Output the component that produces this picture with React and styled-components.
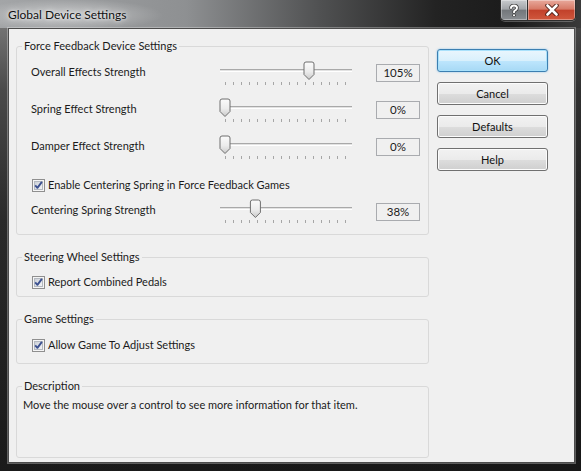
import React from 'react';
import styled, { createGlobalStyle } from 'styled-components';

const GlobalStyle = createGlobalStyle`
  html, body {
    margin: 0;
    padding: 0;
    background: #1c1c1c;
  }
  body {
    font-family: Lato, 'Noto Sans', sans-serif;
    font-size: 11px;
    color: #1b1b1b;
  }
`;

const MAX = 150;

const CheckIcon = () => (
  <svg width="13" height="13" viewBox="0 0 13 13">
    <defs>
      <linearGradient id="cbFill" x1="0" y1="0" x2="1" y2="1">
        <stop offset="0" stopColor="#c9ced6" />
        <stop offset="1" stopColor="#f7f8f9" />
      </linearGradient>
    </defs>
    <rect x="0.5" y="0.5" width="12" height="12" fill="#f5f5f5" stroke="#8f8f8f" />
    <rect x="2.5" y="2.5" width="8" height="8" fill="url(#cbFill)" stroke="#b4b9c0" />
    <path d="M3.2 6.4 L5.4 8.8 L9.9 2.9" fill="none" stroke="#3c5190" strokeWidth="1.9" strokeLinejoin="round" />
  </svg>
);

const SliderTrack = ({ value }) => {
  const x = 7 + (value / MAX) * 120;
  const ticks = Array.from({ length: 16 }, (_, i) => 7 + i * 8);
  return (
    <svg width="136" height="24" viewBox="0 0 136 24">
      <defs>
        <linearGradient id="thumbFill" x1="0" y1="0" x2="0" y2="1">
          <stop offset="0" stopColor="#fbfbfb" />
          <stop offset="0.55" stopColor="#ececec" />
          <stop offset="1" stopColor="#c9c9c9" />
        </linearGradient>
      </defs>
      <line x1="2" y1="8.5" x2="134" y2="8.5" stroke="#a9a9a9" />
      <line x1="2" y1="9.5" x2="134" y2="9.5" stroke="#e2e2e2" />
      <line x1="2" y1="10.5" x2="134" y2="10.5" stroke="#ffffff" />
      {ticks.map((t) => (
        <line key={t} x1={t + 0.5} y1="21" x2={t + 0.5} y2="24" stroke="#a6a6a6" />
      ))}
      <path
        d={`M${x - 5} 3 Q${x - 5} 1 ${x - 3} 1 H${x + 3} Q${x + 5} 1 ${x + 5} 3 V13.5 L${x} 18.5 L${x - 5} 13.5 Z`}
        fill="url(#thumbFill)"
        stroke="#6f6f6f"
      />
    </svg>
  );
};

const HelpGlyph = () => (
  <svg width="10" height="13" viewBox="0 0 10 13">
    <path d="M2 4 Q2 1.5 5 1.5 Q8 1.5 8 4 Q8 5.6 5.8 6.6 Q5 7 5 8.3" fill="none" stroke="#3a3a3a" strokeWidth="3.4" strokeLinecap="round" />
    <path d="M2 4 Q2 1.5 5 1.5 Q8 1.5 8 4 Q8 5.6 5.8 6.6 Q5 7 5 8.3" fill="none" stroke="#ffffff" strokeWidth="2" strokeLinecap="round" />
    <circle cx="5" cy="11.3" r="1.7" fill="#3a3a3a" />
    <circle cx="5" cy="11.3" r="1.1" fill="#ffffff" />
  </svg>
);

const CloseGlyph = () => (
  <svg width="14" height="12" viewBox="0 0 14 12">
    <path d="M2.5 1.5 L11.5 10.5 M11.5 1.5 L2.5 10.5" stroke="#4a1a12" strokeWidth="4.4" strokeLinecap="round" />
    <path d="M2.5 1.5 L11.5 10.5 M11.5 1.5 L2.5 10.5" stroke="#ffffff" strokeWidth="2.6" strokeLinecap="round" />
  </svg>
);

const App = () => {
  const sliders = [
    { label: 'Overall Effects Strength', value: 105 },
    { label: 'Spring Effect Strength', value: 0 },
    { label: 'Damper Effect Strength', value: 0 },
  ];

  return (
    <>
      <GlobalStyle />
      <Window>
        <TitleBar>
          <Caption>Global Device Settings</Caption>
          <CaptionButtons>
            <HelpButton><HelpGlyph /></HelpButton>
            <CloseButton><CloseGlyph /></CloseButton>
          </CaptionButtons>
        </TitleBar>

        <Frame>
          <Panel>
            <LeftColumn>
              <Group>
                <Legend>Force Feedback Device Settings</Legend>
                <ForceContent>
                  {sliders.map((s) => (
                    <SliderRow key={s.label} $height={37}>
                      <RowLabel>{s.label}</RowLabel>
                      <SliderTrack value={s.value} />
                      <ValueBox>{s.value}%</ValueBox>
                    </SliderRow>
                  ))}
                  <CheckRow $height={26} $top={7} $indent={1}>
                    <CheckIcon />
                    <span>Enable Centering Spring in Force Feedback Games</span>
                  </CheckRow>
                  <SliderRow $height={26}>
                    <RowLabel>Centering Spring Strength</RowLabel>
                    <SliderTrack value={38} />
                    <ValueBox>38%</ValueBox>
                  </SliderRow>
                </ForceContent>
              </Group>

              <Group>
                <Legend>Steering Wheel Settings</Legend>
                <SimpleContent $top={6} $bottom={3}>
                  <CheckRow $height={22}>
                    <CheckIcon />
                    <span>Report Combined Pedals</span>
                  </CheckRow>
                </SimpleContent>
              </Group>

              <Group>
                <Legend>Game Settings</Legend>
                <SimpleContent $top={7} $bottom={7}>
                  <CheckRow $height={22}>
                    <CheckIcon />
                    <span>Allow Game To Adjust Settings</span>
                  </CheckRow>
                </SimpleContent>
              </Group>

              <Group $grow>
                <Legend>Description</Legend>
                <DescriptionText>
                  Move the mouse over a control to see more information for that item.
                </DescriptionText>
              </Group>
            </LeftColumn>

            <ButtonColumn>
              <DialogButton $primary>OK</DialogButton>
              <DialogButton>Cancel</DialogButton>
              <DialogButton>Defaults</DialogButton>
              <DialogButton>Help</DialogButton>
            </ButtonColumn>
          </Panel>
        </Frame>
      </Window>
    </>
  );
};

const Window = styled.div`
  width: 581px;
  height: 471px;
  display: flex;
  flex-direction: column;
  overflow: hidden;
  background:
    linear-gradient(to right, rgba(20, 20, 20, 0) 0%, rgba(20, 20, 20, 0.5) 100%),
    linear-gradient(to bottom, #858585 0px, #4a4a4a 90px, #2a2a2a 220px, #1a1a1a 100%);
`;

const TitleBar = styled.div`
  height: 28px;
  display: flex;
  align-items: flex-start;
  padding-left: 8px;
  background:
    radial-gradient(ellipse 95px 16px at 68px 15px, rgba(255, 255, 255, 0.45), rgba(255, 255, 255, 0) 100%),
    linear-gradient(to right, #a3a5a7 0%, #8e9092 32%, #505152 55%, #232323 75%, #1b1b1b 88%, #3a3a3a 100%);
`;

const Caption = styled.div`
  padding-top: 6px;
  line-height: 18px;
  font-size: 12px;
  color: #111;
  text-shadow: 0 0 6px rgba(255, 255, 255, 0.9), 0 0 3px rgba(255, 255, 255, 0.7);
`;

const CaptionButtons = styled.div`
  margin-left: auto;
  margin-right: 5px;
  display: flex;
  height: 20px;
  border: 1px solid #2e2e2e;
  border-top: none;
  border-radius: 0 0 5px 5px;
  overflow: hidden;
  box-shadow: 0 1px 0 rgba(255, 255, 255, 0.25);
`;

const CaptionButton = styled.div`
  display: flex;
  align-items: center;
  justify-content: center;
  box-shadow: inset 0 0 0 1px rgba(255, 255, 255, 0.35);
`;

const HelpButton = styled(CaptionButton)`
  width: 26px;
  border-right: 1px solid #2e2e2e;
  background: linear-gradient(to bottom, #c8cbce 0%, #a2a5a9 45%, #73777b 52%, #8a8e92 100%);
`;

const CloseButton = styled(CaptionButton)`
  width: 47px;
  background: linear-gradient(to bottom, #e8a99c 0%, #d77a67 45%, #c2412b 52%, #d0583d 100%);
`;

const Frame = styled.div`
  flex: 1;
  display: flex;
  padding: 0 6px 8px 8px;
`;

const Panel = styled.div`
  flex: 1;
  display: flex;
  gap: 8px;
  padding: 0 7px 4px 7px;
  background: #f0f0f0;
  border: 1px solid #4c4c4c;
  box-shadow: 0 0 0 1px rgba(255, 255, 255, 0.3);
`;

const LeftColumn = styled.div`
  width: 413px;
  padding-top: 9px;
  display: flex;
  flex-direction: column;
  gap: 14px;
`;

const Group = styled.fieldset`
  margin: 0;
  padding: 0;
  border: 1px solid #d9d9d9;
  border-radius: 3px;
  min-width: 0;
  flex: ${(p) => (p.$grow ? 1 : 'none')};
`;

const Legend = styled.legend`
  margin-left: 5px;
  padding: 0 2px;
  line-height: 16px;
  color: #1b1b1b;
`;

const ForceContent = styled.div`
  padding: 0 8px 10px 14px;
  display: flex;
  flex-direction: column;
`;

const SimpleContent = styled.div`
  padding: ${(p) => p.$top}px 8px ${(p) => p.$bottom}px 15px;
`;

const SliderRow = styled.div`
  height: ${(p) => p.$height}px;
  display: grid;
  grid-template-columns: 187px 136px 1fr;
  align-items: center;
`;

const RowLabel = styled.span`
  line-height: 16px;
  margin-top: -2px;
`;

const ValueBox = styled.div`
  justify-self: end;
  width: 42px;
  height: 16px;
  line-height: 16px;
  text-align: center;
  font-size: 11.5px;
  border: 1px solid #a9abaf;
  background: #f0f0f0;
  margin-top: 1px;
`;

const CheckRow = styled.label`
  height: ${(p) => p.$height}px;
  margin-top: ${(p) => p.$top || 0}px;
  margin-left: ${(p) => p.$indent || 0}px;
  display: flex;
  align-items: center;
  gap: 3px;
  line-height: 16px;

  svg {
    flex: none;
  }
`;

const DescriptionText = styled.div`
  padding: 3px 6px;
  line-height: 16px;
`;

const ButtonColumn = styled.div`
  width: 111px;
  padding-top: 20px;
  display: flex;
  flex-direction: column;
  gap: 10px;
`;

const DialogButton = styled.div`
  height: 23px;
  box-sizing: border-box;
  display: flex;
  align-items: center;
  justify-content: center;
  border-radius: 3px;
  color: #111;
  border: 1px solid ${(p) => (p.$primary ? '#3c7fb1' : '#707070')};
  background: ${(p) =>
    p.$primary
      ? 'linear-gradient(to bottom, #eaf6fd 0%, #d9f0fc 50%, #bee6fd 51%, #a7d9f5 100%)'
      : 'linear-gradient(to bottom, #f2f2f2 0%, #ebebeb 50%, #dddddd 51%, #cfcfcf 100%)'};
  box-shadow: ${(p) =>
    p.$primary
      ? 'inset 0 0 0 1px #a9e1fb, 0 0 2px rgba(60, 160, 230, 0.6)'
      : 'inset 0 0 0 1px #fcfcfc'};
`;

export default App;
